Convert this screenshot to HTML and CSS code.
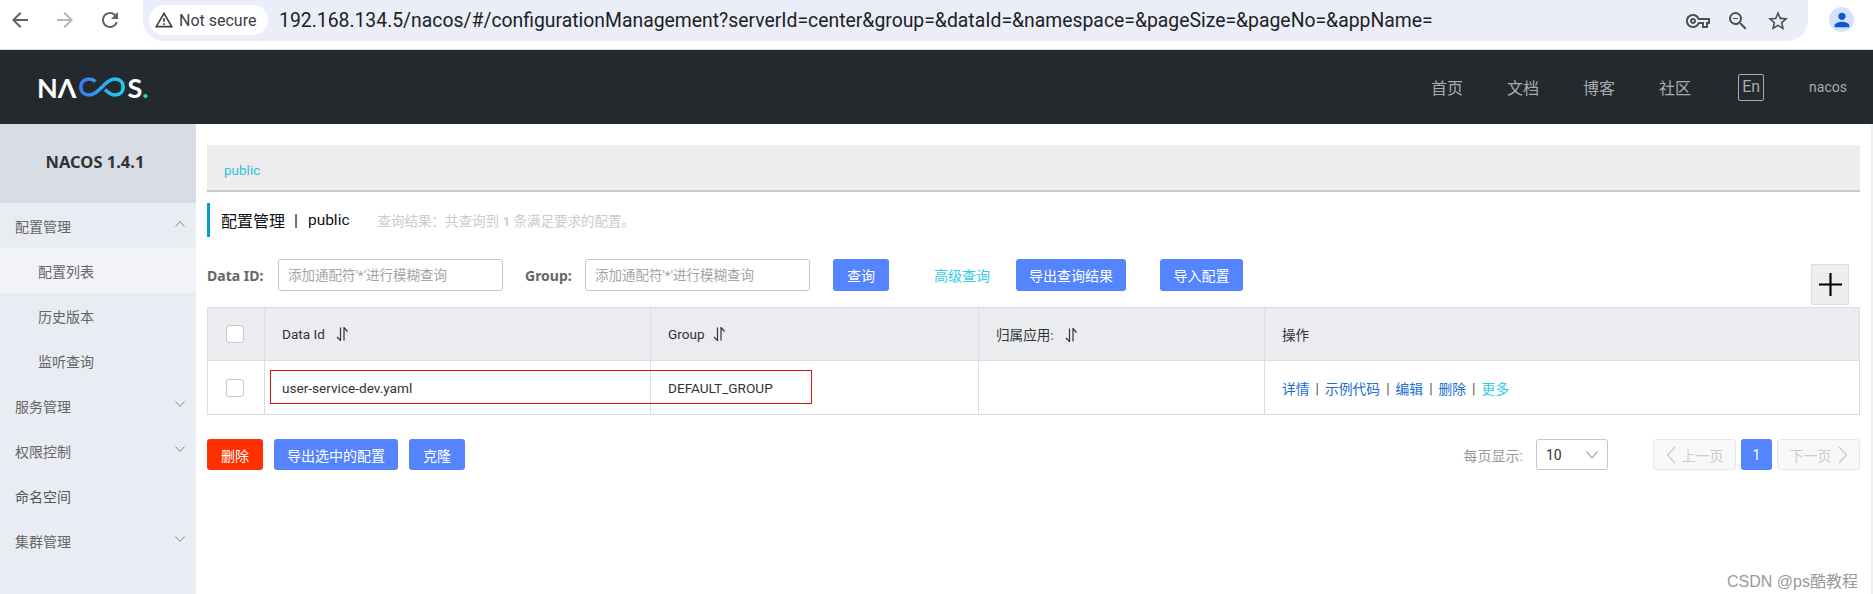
FILE: index.html
```html
<!DOCTYPE html>
<html lang="zh-CN">
<head>
  <meta charset="UTF-8">
  <title>Nacos</title>
  <link rel="stylesheet" href="styles.css">
</head>
<body>

  <div class="toolbar">
    <svg class="tool-icon" viewBox="0 0 24 24"><path d="M20 11H7.83l5.59-5.59L12 4l-8 8 8 8 1.41-1.41L7.83 13H20v-2z"/></svg>
    <svg class="tool-icon tool-off" viewBox="0 0 24 24"><path d="M12 4l-1.41 1.41L16.17 11H4v2h12.17l-5.58 5.59L12 20l8-8z"/></svg>
    <svg class="tool-icon" viewBox="0 0 24 24"><path d="M17.65 6.35A7.958 7.958 0 0 0 12 4c-4.42 0-7.99 3.58-7.99 8s3.57 8 7.99 8c3.73 0 6.84-2.55 7.73-6h-2.08A5.99 5.99 0 0 1 12 18c-3.31 0-6-2.69-6-6s2.69-6 6-6c1.66 0 3.14.69 4.22 1.78L13 11h7V4l-2.35 2.35z"/></svg>
    <div class="omnibox">
      <div class="chip">
        <svg viewBox="0 0 24 24"><path d="M12 5.99L19.53 19H4.47L12 5.99M12 2L1 21h22L12 2zm1 14h-2v2h2v-2zm0-6h-2v4h2v-4z"/></svg>
        <span>Not secure</span>
      </div>
      <div class="url">192.168.134.5/nacos/#/configurationManagement?serverId=center&amp;group=&amp;dataId=&amp;namespace=&amp;pageSize=&amp;pageNo=&amp;appName=</div>
      <div class="omni-icons">
        <svg viewBox="0 0 24 24"><path d="M22 19h-6v-4h-2.68c-1.14 2.42-3.6 4-6.32 4-3.86 0-7-3.14-7-7s3.14-7 7-7c2.72 0 5.17 1.58 6.32 4H24v6h-2v4zm-4-2h2v-4h2v-2H11.94l-.23-.67C11.01 8.34 9.11 7 7 7c-2.76 0-5 2.24-5 5s2.24 5 5 5c2.11 0 4.01-1.34 4.71-3.33l.23-.67H18v4zM7 15c-1.65 0-3-1.35-3-3s1.35-3 3-3 3 1.35 3 3-1.35 3-3 3zm0-4c-.55 0-1 .45-1 1s.45 1 1 1 1-.45 1-1-.45-1-1-1z"/></svg>
        <svg viewBox="0 0 24 24"><path d="M15.5 14h-.79l-.28-.27A6.471 6.471 0 0 0 16 9.5 6.5 6.5 0 1 0 9.5 16c1.61 0 3.09-.59 4.23-1.57l.27.28v.79l5 4.99L20.49 19l-4.99-5zm-6 0C7.01 14 5 11.99 5 9.5S7.01 5 9.5 5 14 7.01 14 9.5 11.99 14 9.5 14zM7 9h5v1H7z"/></svg>
        <svg viewBox="0 0 24 24"><path d="M22 9.24l-7.19-.62L12 2 9.19 8.63 2 9.24l5.46 4.73L5.82 21 12 17.27 18.18 21l-1.63-7.03L22 9.24zM12 15.4l-3.76 2.27 1-4.28-3.32-2.88 4.38-.38L12 6.1l1.71 4.04 4.38.38-3.32 2.88 1 4.28L12 15.4z"/></svg>
      </div>
    </div>
    <div class="avatar">
      <svg viewBox="0 0 24 24"><path d="M12 12c2.21 0 4-1.79 4-4s-1.79-4-4-4-4 1.79-4 4 1.79 4 4 4zm0 2c-2.67 0-8 1.34-8 4v2h16v-2c0-2.66-5.33-4-8-4z"/></svg>
    </div>
  </div>

  <header class="header">
    <div class="logo">
      <span>N&#923;</span>
      <svg class="logo-loop" viewBox="0 0 46 20">
        <defs>
          <linearGradient id="loopColor" x1="0" x2="1" y1="0" y2="0">
            <stop offset="0" stop-color="#3a7bf0"/>
            <stop offset="1" stop-color="#1fd0ee"/>
          </linearGradient>
        </defs>
        <path d="M16.500 4.500C14.500 2.800 12.500 2 10 2 5 2 1.800 5.500 1.800 10S5 18 10 18C16 18 19.500 13.500 23 10 26.500 6.500 30 2 36 2 41 2 44.200 5.500 44.200 10S41 18 36 18C32 18 29 15.500 26 12.500" fill="none" stroke="url(#loopColor)" stroke-width="3.600"/>
      </svg>
      <span>S<i class="logo-dot">.</i></span>
    </div>
    <nav class="top-nav">
      <a>首页</a>
      <a>文档</a>
      <a>博客</a>
      <a>社区</a>
      <a class="lang">En</a>
      <a class="user">nacos</a>
    </nav>
  </header>

  <div class="main">
    <aside class="sidebar">
      <div class="version">NACOS 1.4.1</div>
      <div class="menu-item">配置管理
        <svg class="chevron" viewBox="0 0 12 12"><path d="M1.500 8.500L6 3.500l4.500 5"/></svg>
      </div>
      <div class="menu-sub menu-active">配置列表</div>
      <div class="menu-sub">历史版本</div>
      <div class="menu-sub">监听查询</div>
      <div class="menu-item">服务管理
        <svg class="chevron" viewBox="0 0 12 12"><path d="M1.500 3.500L6 8.500l4.500-5"/></svg>
      </div>
      <div class="menu-item">权限控制
        <svg class="chevron" viewBox="0 0 12 12"><path d="M1.500 3.500L6 8.500l4.500-5"/></svg>
      </div>
      <div class="menu-item menu-plain">命名空间</div>
      <div class="menu-item">集群管理
        <svg class="chevron" viewBox="0 0 12 12"><path d="M1.500 3.500L6 8.500l4.500-5"/></svg>
      </div>
    </aside>

    <section class="content">
      <div class="breadcrumb">public</div>

      <div class="page-title">
        <span class="title-main">配置管理</span>
        <span class="title-bar">|</span>
        <span class="title-ns">public</span>
        <span class="title-sub">查询结果：共查询到 <b>1</b> 条满足要求的配置。</span>
      </div>

      <div class="search-row">
        <label class="label-id">Data ID:</label>
        <input class="search-input" type="text" placeholder="添加通配符'*'进行模糊查询">
        <label class="label-group">Group:</label>
        <input class="search-input" type="text" placeholder="添加通配符'*'进行模糊查询">
        <button class="btn btn-query">查询</button>
        <a class="advanced">高级查询</a>
        <button class="btn btn-export">导出查询结果</button>
        <button class="btn btn-import">导入配置</button>
      </div>

      <div class="table-wrap">
        <div class="plus-box">
          <svg viewBox="0 0 24 24"><path d="M12 0v24M0 12h24"/></svg>
        </div>
        <table class="config-table">
          <colgroup>
            <col class="col-check">
            <col class="col-id">
            <col class="col-group">
            <col class="col-app">
            <col>
          </colgroup>
          <thead>
            <tr>
              <th class="cell-check"><span class="checkbox"></span></th>
              <th>Data Id<svg class="sort" viewBox="0 0 12 14"><path d="M4.500.5v13L1 10M8 13.500V.5l3.500 4"/></svg></th>
              <th>Group<svg class="sort sort-near" viewBox="0 0 12 14"><path d="M4.500.5v13L1 10M8 13.500V.5l3.500 4"/></svg></th>
              <th>归属应用:<svg class="sort" viewBox="0 0 12 14"><path d="M4.500.5v13L1 10M8 13.500V.5l3.500 4"/></svg></th>
              <th>操作</th>
            </tr>
          </thead>
          <tbody>
            <tr>
              <td class="cell-check"><span class="checkbox"></span></td>
              <td>user-service-dev.yaml</td>
              <td>DEFAULT_GROUP</td>
              <td></td>
              <td class="ops">
                <a>详情</a><span class="sep">|</span><a>示例代码</a><span class="sep">|</span><a>编辑</a><span class="sep">|</span><a>删除</a><span class="sep">|</span><a class="more">更多</a>
              </td>
            </tr>
          </tbody>
        </table>
        <div class="red-mark"></div>
      </div>

      <div class="bottom-row">
        <button class="btn btn-danger">删除</button>
        <button class="btn">导出选中的配置</button>
        <button class="btn">克隆</button>
        <div class="pager">
          <span class="page-label">每页显示:</span>
          <div class="page-select">10
            <svg viewBox="0 0 12 12"><path d="M.5 2.500L6 9l5.500-6.500"/></svg>
          </div>
          <div class="page-btn page-off">
            <svg viewBox="0 0 10 18"><path d="M9 1L1.500 9 9 17"/></svg>上一页
          </div>
          <div class="page-btn page-current">1</div>
          <div class="page-btn page-off">下一页
            <svg viewBox="0 0 10 18"><path d="M1 1l7.500 8L1 17"/></svg>
          </div>
        </div>
      </div>
    </section>
  </div>

  <div class="scroll-edge"></div>
  <div class="watermark">CSDN @ps酷教程</div>

</body>
</html>
```

FILE: styles.css
```css
* {
  margin: 0;
  padding: 0;
  box-sizing: border-box;
}
html, body {
  height: 594px;
  overflow: hidden;
}
body {
  position: relative;
  font-family: Roboto, "Noto Sans CJK SC", sans-serif;
  font-size: 14px;
  color: #333;
  background: #fff;
}

/* browser chrome */
.toolbar {
  display: flex;
  align-items: flex-start;
  height: 50px;
  padding-left: 8px;
  background: #fff;
  border-bottom: 1px solid #dadce0;
}
.tool-icon {
  width: 24px;
  height: 24px;
  margin: 8px 21px 0 0;
  fill: #5f6368;
}
.tool-off {
  fill: #b4b6b9;
}
.omnibox {
  display: flex;
  align-items: center;
  width: 1665px;
  height: 41px;
  padding: 0 0 0 6px;
  background: #ebeef8;
  border-radius: 0 0 21px 21px;
}
.chip {
  display: flex;
  align-items: center;
  gap: 5px;
  width: 119px;
  height: 30px;
  margin-top: -1px;
  padding-left: 5px;
  background: #fff;
  border-radius: 15px;
  font-size: 16px;
  color: #3c4043;
}
.chip svg {
  width: 20px;
  height: 20px;
  fill: #3c4043;
}
.url {
  margin-left: 11px;
  font-size: 19.380px;
  color: #202124;
  white-space: nowrap;
}
.omni-icons {
  display: flex;
  gap: 16px;
  margin-left: auto;
  margin-right: 18px;
}
.omni-icons svg {
  width: 24px;
  height: 24px;
  fill: #4c4f53;
}
.avatar {
  display: flex;
  align-items: center;
  justify-content: center;
  width: 25px;
  height: 25px;
  margin: 7px 0 0 21px;
  border-radius: 50%;
  background: #d3e3fd;
}
.avatar svg {
  width: 22px;
  height: 22px;
  fill: #0b57d0;
}

/* nacos header */
.header {
  display: flex;
  align-items: center;
  justify-content: space-between;
  height: 74px;
  padding: 0 26px 0 37px;
  background: #24292d;
}
.logo {
  display: flex;
  align-items: center;
  font-family: Lato, sans-serif;
  font-size: 27px;
  font-weight: 700;
  color: #fff;
  line-height: 1;
}
.logo-loop {
  width: 46px;
  height: 20px;
  margin: 0 3px 0 2px;
}
.logo-dot {
  font-style: normal;
  color: #1fd0ee;
}
.top-nav {
  display: flex;
  align-items: center;
  font-size: 16px;
  color: #a9abad;
}
.top-nav a {
  margin-left: 44px;
}
.top-nav .lang {
  width: 26px;
  height: 27px;
  margin-left: 47px;
  line-height: 24px;
  text-align: center;
  border: 1px solid #a9abad;
  border-radius: 2px;
}
.top-nav .user {
  margin-left: 45px;
  font-size: 14px;
}

/* layout */
.main {
  display: flex;
  height: 470px;
}
.sidebar {
  flex: 0 0 196px;
  background: #e9ecf2;
}
.version {
  height: 79px;
  padding-right: 6px;
  line-height: 76px;
  text-align: center;
  background: #d8dce5;
  font-family: "Noto Sans", sans-serif;
  font-size: 16.500px;
  font-weight: 700;
  color: #333;
}
.menu-item, .menu-sub {
  display: flex;
  align-items: center;
  height: 45px;
  padding-top: 1px;
  color: #666;
}
.menu-item {
  justify-content: space-between;
  padding-left: 15px;
  padding-right: 10px;
}
.menu-sub {
  padding-left: 38px;
}
.menu-active {
  background: #f1f3f8;
}
.menu-plain {
  color: #555;
}
.chevron {
  width: 12px;
  height: 12px;
  margin-top: -5px;
  fill: none;
  stroke: #888;
  stroke-width: 1;
}

.content {
  flex: 1;
  padding: 21px 13px 0 11px;
}
.breadcrumb {
  height: 47px;
  padding: 16px 0 0 17px;
  line-height: 18px;
  background: #ededed;
  border-bottom: 2px solid #ccc;
  font-size: 13.500px;
  color: #2fc3dc;
}
.page-title {
  display: flex;
  align-items: center;
  height: 34px;
  margin-top: 11px;
  padding-left: 11px;
  border-left: 3px solid #0a9bd0;
  font-size: 16px;
  color: #111;
}
.title-bar {
  margin: 0 10px 0 9px;
}
.title-ns {
  font-size: 15.500px;
}
.title-sub {
  margin-left: 28px;
  font-size: 13.500px;
  color: #ccc;
}
.search-row {
  display: flex;
  align-items: center;
  height: 32px;
  margin-top: 22px;
}
.search-row label {
  font-family: "Noto Sans", sans-serif;
  font-size: 14px;
  font-weight: 700;
  color: #666;
}
.label-id {
  width: 71px;
}
.label-group {
  width: 60px;
  margin-left: 22px;
}
.search-input {
  width: 225px;
  height: 32px;
  padding: 0 9px;
  border: 1px solid #c4c6cf;
  border-radius: 3px;
  font-family: Roboto, "Noto Sans CJK SC", sans-serif;
  font-size: 13.500px;
}
.search-input::placeholder {
  color: #a5a5a5;
}
.btn {
  height: 32px;
  min-width: 56px;
  padding: 0 13px;
  border: none;
  border-radius: 3px;
  background: #5584ff;
  color: #fff;
  font-family: Roboto, "Noto Sans CJK SC", sans-serif;
  font-size: 14px;
}
.btn-query {
  margin-left: 23px;
}
.advanced {
  margin-left: 45px;
  color: #33cde5;
}
.btn-export {
  width: 110px;
  margin-left: 26px;
  padding: 0;
}
.btn-import {
  width: 83px;
  margin-left: 34px;
  padding: 0;
}

/* table */
.table-wrap {
  position: relative;
  margin-top: 16px;
}
.plus-box {
  position: absolute;
  top: -43px;
  right: 11px;
  display: flex;
  align-items: center;
  justify-content: center;
  width: 38px;
  height: 41px;
  background: #eee;
  border: 1px solid #ddd;
}
.plus-box svg {
  width: 23px;
  height: 23px;
  fill: none;
  stroke: #000;
  stroke-width: 2.200;
}
.config-table {
  width: 100%;
  table-layout: fixed;
  border-collapse: collapse;
  border: 1px solid #dcdee3;
}
.col-check {
  width: 57px;
}
.col-id {
  width: 386px;
}
.col-group {
  width: 328px;
}
.col-app {
  width: 286px;
}
.config-table th, .config-table td {
  padding: 0 17px;
  border: 1px solid #dcdee3;
  text-align: left;
  font-weight: 400;
  font-size: 13.600px;
  color: #333;
}
.config-table th {
  height: 53px;
  background: #ebecf0;
}
.config-table td {
  height: 54px;
}
.config-table .cell-check {
  padding: 0 0 0 18px;
}
.checkbox {
  display: block;
  width: 18px;
  height: 18px;
  background: #fff;
  border: 1px solid #c4c6cf;
  border-radius: 3px;
}
.sort {
  width: 12px;
  height: 14px;
  margin-left: 11px;
  vertical-align: -2px;
  fill: none;
  stroke: #333;
  stroke-width: 1.200;
}
.sort-near {
  margin-left: 8px;
}
.config-table .ops {
  font-size: 13.800px;
}
.ops a {
  color: #1a6fd0;
}
.ops .more {
  color: #33cde5;
}
.sep {
  margin: 0 6px;
  color: #555;
}
.red-mark {
  position: absolute;
  top: 63px;
  left: 63px;
  width: 542px;
  height: 34px;
  border: 1px solid #d0121b;
}

/* bottom actions */
.bottom-row {
  display: flex;
  align-items: flex-start;
  gap: 11px;
  margin-top: 24px;
}
.bottom-row .btn {
  height: 31px;
}
.bottom-row .btn-danger {
  background: #ff3000;
}
.pager {
  display: flex;
  align-items: center;
  height: 31px;
  margin-left: auto;
}
.page-label {
  color: #999;
  font-size: 14px;
}
.page-select {
  display: flex;
  align-items: center;
  justify-content: space-between;
  width: 72px;
  height: 31px;
  margin: 0 45px 0 13px;
  padding: 0 9px;
  border: 1px solid #c4c6cf;
  border-radius: 3px;
  color: #333;
}
.page-select svg {
  width: 12px;
  height: 12px;
  fill: none;
  stroke: #777;
  stroke-width: 1;
}
.page-btn {
  display: flex;
  align-items: center;
  justify-content: center;
  gap: 6px;
  height: 31px;
  border-radius: 3px;
}
.page-btn svg {
  width: 10px;
  height: 18px;
  fill: none;
  stroke: #c8c9cc;
  stroke-width: 1.200;
}
.page-off {
  width: 83px;
  background: #f7f8fa;
  border: 1px solid #e6e7eb;
  color: #ccc;
}
.page-current {
  width: 31px;
  margin: 0 5px;
  background: #5584ff;
  color: #fff;
}

.scroll-edge {
  position: absolute;
  top: 124px;
  right: 0;
  bottom: 0;
  width: 2px;
  background: #f0f0f0;
}
.watermark {
  position: absolute;
  top: 568px;
  left: 1727px;
  font-family: "Liberation Sans", "Noto Sans CJK SC", sans-serif;
  font-size: 16px;
  color: #9a9a9a;
}
```
